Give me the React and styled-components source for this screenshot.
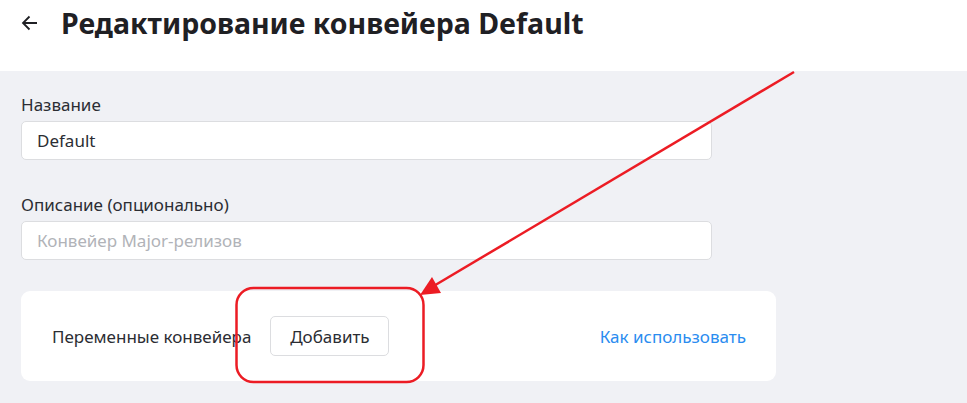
import React from "react";
import styled, { createGlobalStyle } from "styled-components";

const GlobalStyle = createGlobalStyle`
    html, body {
        margin: 0;
        padding: 0;
        background: #f0f1f5;
        font-family: "Noto Sans", "Open Sans", sans-serif;
        color: #2b2d33;
    }
    * {
        box-sizing: border-box;
    }
`;

const App = () => {
    return (
        <Page>
            <GlobalStyle />
            <Header>
                <BackButton aria-label="Назад">
                    <svg width="18" height="18" viewBox="0 0 18 18" fill="none">
                        <path
                            d="M16 9H2.5M8.5 2.5L2 9l6.5 6.5"
                            stroke="#1f2024"
                            strokeWidth="1.8"
                        />
                    </svg>
                </BackButton>
                <Title>Редактирование конвейера Default</Title>
            </Header>
            <Content>
                <Field>
                    <Label>Название</Label>
                    <Input defaultValue="Default" />
                </Field>
                <Field>
                    <Label>Описание (опционально)</Label>
                    <Input placeholder="Конвейер Major-релизов" />
                </Field>
                <Card>
                    <CardLeft>
                        <CardText>Переменные конвейера</CardText>
                        <AddButton>Добавить</AddButton>
                    </CardLeft>
                    <HelpLink href="#">Как использовать</HelpLink>
                </Card>
            </Content>
            <Annotation width="967" height="403" viewBox="0 0 967 403">
                <rect
                    x="236.5"
                    y="288"
                    width="187"
                    height="94"
                    rx="17"
                    fill="none"
                    stroke="#ec1c24"
                    strokeWidth="2.5"
                />
                <line
                    x1="794"
                    y1="72"
                    x2="432"
                    y2="287"
                    stroke="#ec1c24"
                    strokeWidth="2.5"
                />
                <polygon
                    points="420,295 432,277 441,293"
                    fill="#ec1c24"
                />
            </Annotation>
        </Page>
    );
};

const Page = styled.div`
    position: relative;
    width: 967px;
    height: 403px;
    overflow: hidden;
    background: #f0f1f5;
`;

const Header = styled.div`
    height: 71px;
    background: #fff;
    display: flex;
    align-items: flex-start;
    padding: 5px 0 0 21px;
    gap: 22px;
`;

const BackButton = styled.button`
    border: none;
    background: none;
    padding: 0;
    margin-top: 9px;
    width: 18px;
    height: 18px;
    display: flex;
    cursor: pointer;
`;

const Title = styled.h1`
    margin: 0;
    font-size: 28.5px;
    line-height: 36px;
    font-weight: 700;
    color: #1f2024;
`;

const Content = styled.div`
    padding: 22px 0 0 21px;
    display: flex;
    flex-direction: column;
`;

const Field = styled.div`
    display: flex;
    flex-direction: column;
    gap: 4px;
    margin-bottom: 33px;
    &:nth-child(2) {
        margin-bottom: 31px;
    }
`;

const Label = styled.label`
    font-size: 17px;
    line-height: 24px;
    color: #2b2d33;
`;

const Input = styled.input`
    width: 691px;
    height: 39px;
    border: 1px solid #dcdde0;
    border-radius: 5px;
    background: #fff;
    padding: 0 15px;
    font-family: "Noto Sans", "Open Sans", sans-serif;
    font-size: 17px;
    color: #2b2d33;
    outline: none;
    &::placeholder {
        color: #b1b3b8;
    }
`;

const Card = styled.div`
    width: 755px;
    height: 90px;
    background: #fff;
    border-radius: 9px;
    display: flex;
    align-items: center;
    justify-content: space-between;
    padding: 0 30px 0 31px;
`;

const CardLeft = styled.div`
    display: flex;
    align-items: center;
    gap: 19px;
`;

const CardText = styled.span`
    font-size: 17px;
    color: #2b2d33;
`;

const AddButton = styled.button`
    width: 119px;
    height: 40px;
    background: #fff;
    border: 1px solid #dcdde0;
    border-radius: 5px;
    font-family: "Noto Sans", "Open Sans", sans-serif;
    font-size: 17px;
    color: #2b2d33;
    cursor: pointer;
`;

const HelpLink = styled.a`
    font-size: 17px;
    color: #2a8cf0;
    text-decoration: none;
`;

const Annotation = styled.svg`
    position: absolute;
    top: 0;
    left: 0;
    pointer-events: none;
`;

export default App;
